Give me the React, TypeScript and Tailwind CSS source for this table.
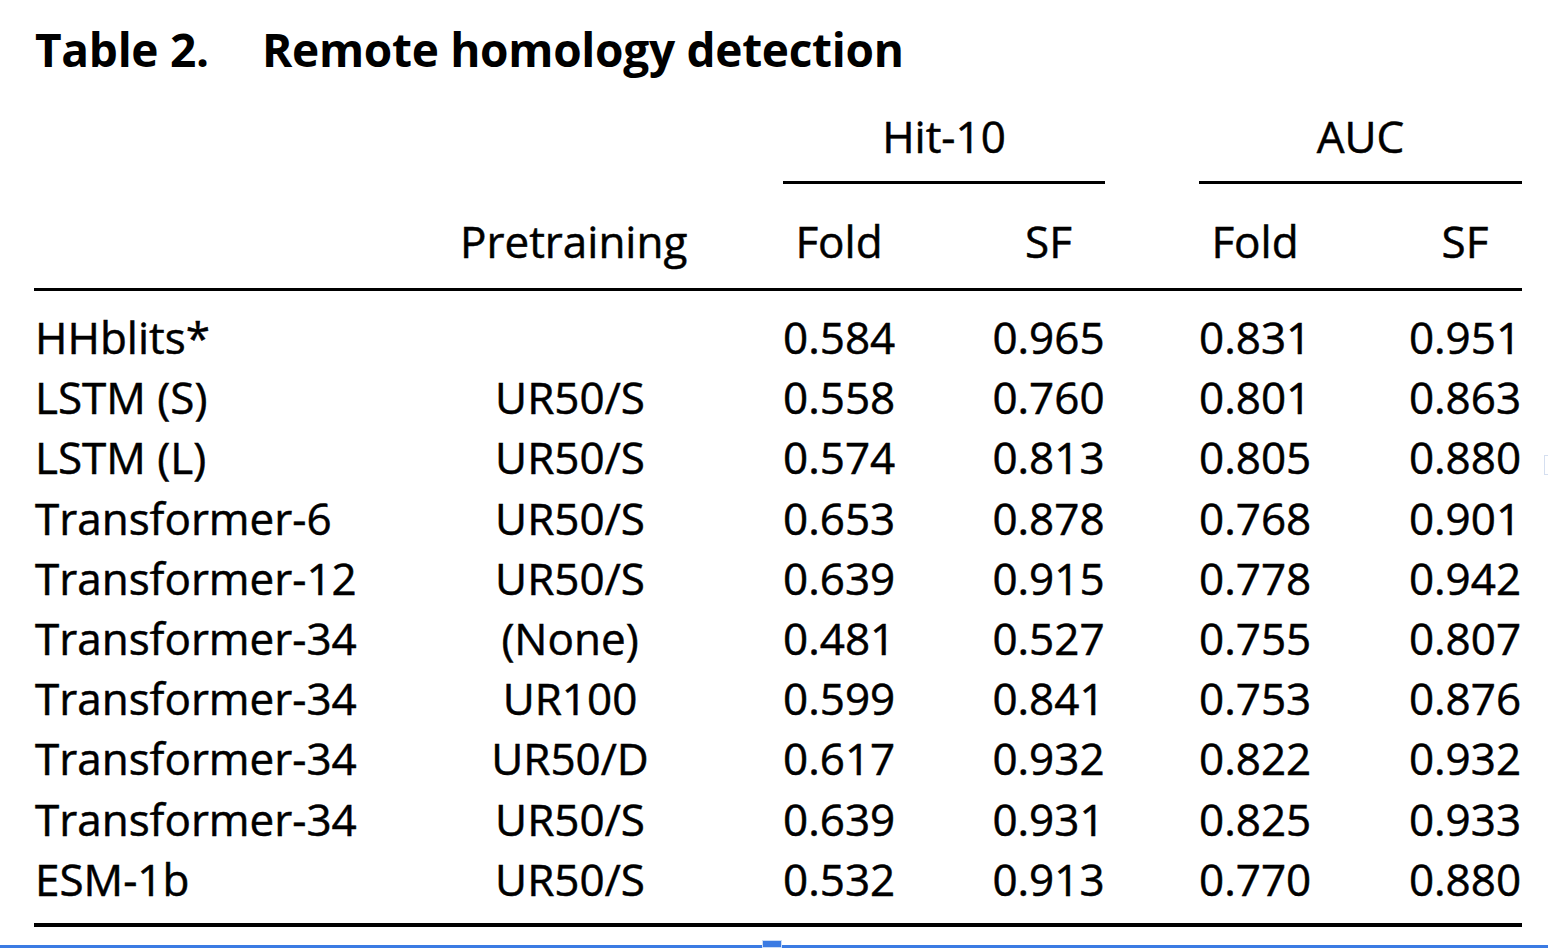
import React from "react";

const rows: [string, string, string, string, string, string][] = [
  ["HHblits*", "", "0.584", "0.965", "0.831", "0.951"],
  ["LSTM (S)", "UR50/S", "0.558", "0.760", "0.801", "0.863"],
  ["LSTM (L)", "UR50/S", "0.574", "0.813", "0.805", "0.880"],
  ["Transformer-6", "UR50/S", "0.653", "0.878", "0.768", "0.901"],
  ["Transformer-12", "UR50/S", "0.639", "0.915", "0.778", "0.942"],
  ["Transformer-34", "(None)", "0.481", "0.527", "0.755", "0.807"],
  ["Transformer-34", "UR100", "0.599", "0.841", "0.753", "0.876"],
  ["Transformer-34", "UR50/D", "0.617", "0.932", "0.822", "0.932"],
  ["Transformer-34", "UR50/S", "0.639", "0.931", "0.825", "0.933"],
  ["ESM-1b", "UR50/S", "0.532", "0.913", "0.770", "0.880"],
];

const grid =
  "grid grid-cols-[426px_220px_103px_112px_97px_113px_94px_112px_97px_114px]";

export default function App() {
  return (
    <div
      className="relative w-[1548px] h-[948px] overflow-hidden bg-white text-black flex flex-col"
      style={{ fontFamily: '"Open Sans", "Noto Sans", sans-serif' }}
    >
      <div className="ml-[34px] w-[1488px] flex flex-col">
        <div className="mt-[25px] h-[48px] pl-[1px] text-[46px] leading-[48px] font-bold tracking-[-0.3px] flex">
          <span className="w-[227px]">Table 2.</span>
          <span>Remote homology detection</span>
        </div>

        <div className="flex flex-col [-webkit-text-stroke:0.5px_black]">
          <div className={`${grid} mt-[33px] text-[44px] leading-[60px]`}>
            <div className="col-start-4 col-span-3 text-center">Hit-10</div>
            <div className="col-start-8 col-span-3 text-center">AUC</div>
          </div>
          <div className={`${grid} mt-[15px]`}>
            <div className="col-start-4 col-span-3 h-[3px] bg-black" />
            <div className="col-start-8 col-span-3 h-[3px] bg-black" />
          </div>
          <div className={`${grid} mt-[27px] text-[44px] leading-[60px]`}>
            <div className="col-start-2 text-center">Pretraining</div>
            <div className="col-start-4 text-center">Fold</div>
            <div className="col-start-6 text-center">SF</div>
            <div className="col-start-8 text-center">Fold</div>
            <div className="col-start-10 text-center">SF</div>
          </div>
          <div className="mt-[17px] h-[3px] bg-black" />

          <div className="mt-[16px] flex flex-col text-[44px] leading-[60.2px]">
            {rows.map((r, i) => (
              <div key={i} className={grid}>
                <div className="pl-[1px] whitespace-nowrap">{r[0]}</div>
                <div className="text-center">{r[1]}</div>
                <div />
                <div className="text-center">{r[2]}</div>
                <div />
                <div className="text-center">{r[3]}</div>
                <div />
                <div className="text-center">{r[4]}</div>
                <div />
                <div className="text-center">{r[5]}</div>
              </div>
            ))}
          </div>
          <div className="mt-[14px] h-[4px] bg-black" />
        </div>
      </div>

      <div className="mt-auto relative h-[3px] w-full bg-[#3b7be3]">
        <div className="absolute left-[762px] bottom-0 w-[20px] h-[8px] bg-[#3b7be3] border border-[#c9dcf7]" />
      </div>
      <div className="absolute right-0 top-[455px] w-[4px] h-[20px] border border-r-0 border-[#d5dff0]" />
    </div>
  );
}
